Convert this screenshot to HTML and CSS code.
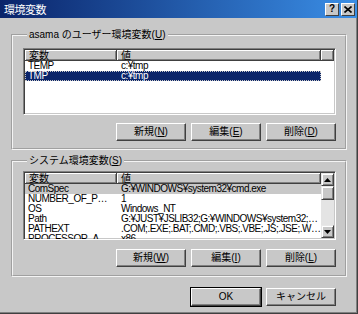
FILE: index.html
```html
<!DOCTYPE html>
<html lang="ja">
<head>
    <meta charset="UTF-8">
    <title>環境変数</title>
    <link rel="stylesheet" href="styles.css">
</head>
<body>
    <div class="window">
        <div class="titlebar">
            <span class="title">環境変数</span>
            <div class="caption-buttons">
                <span class="cap-btn">?</span>
                <span class="cap-btn">
                    <svg width="8" height="7" viewBox="0 0 8 7"><path d="M0.5 0.5 L7.5 6.5 M7.5 0.5 L0.5 6.5" stroke="#000" stroke-width="1.6"/></svg>
                </span>
            </div>
        </div>

        <div class="client">
            <fieldset class="group group-user">
                <legend>asama のユーザー環境変数(<u>U</u>)</legend>
                <div class="listview lv-user">
                    <div class="lv-main">
                        <div class="lv-header">
                            <span class="col col-name">変数</span>
                            <span class="col col-value">値</span>
                            <span class="col col-rest"></span>
                        </div>
                        <div class="lv-row">
                            <span class="cell name">TEMP</span>
                            <span class="cell value">c:¥tmp</span>
                        </div>
                        <div class="lv-row selected">
                            <span class="cell name">TMP</span>
                            <span class="cell value">c:¥tmp</span>
                        </div>
                    </div>
                </div>
                <div class="btn-row">
                    <button class="btn">新規(<u>N</u>)</button>
                    <button class="btn">編集(<u>E</u>)</button>
                    <button class="btn">削除(<u>D</u>)</button>
                </div>
            </fieldset>

            <fieldset class="group group-system">
                <legend>システム環境変数(<u>S</u>)</legend>
                <div class="listview lv-system">
                    <div class="lv-main">
                        <div class="lv-header">
                            <span class="col col-name">変数</span>
                            <span class="col col-value wide">値</span>
                        </div>
                        <div class="lv-row current">
                            <span class="cell name">ComSpec</span>
                            <span class="cell value">G:¥WINDOWS¥system32¥cmd.exe</span>
                        </div>
                        <div class="lv-row">
                            <span class="cell name">NUMBER_OF_PROCESSORS</span>
                            <span class="cell value">1</span>
                        </div>
                        <div class="lv-row">
                            <span class="cell name">OS</span>
                            <span class="cell value">Windows_NT</span>
                        </div>
                        <div class="lv-row">
                            <span class="cell name">Path</span>
                            <span class="cell value">G:¥JUST¥JSLIB32;G:¥WINDOWS¥system32;G:¥WINDOWS;G:¥WINDOWS¥System32¥Wbem</span>
                        </div>
                        <div class="lv-row">
                            <span class="cell name">PATHEXT</span>
                            <span class="cell value">.COM;.EXE;.BAT;.CMD;.VBS;.VBE;.JS;.JSE;.WSF;.WSH</span>
                        </div>
                        <div class="lv-row">
                            <span class="cell name">PROCESSOR_ARCHITECTURE</span>
                            <span class="cell value">x86</span>
                        </div>
                    </div>
                    <div class="scrollbar">
                        <span class="sb-btn">
                            <svg width="7" height="4" viewBox="0 0 7 4"><path d="M3.5 0 L7 4 L0 4 Z" fill="#000"/></svg>
                        </span>
                        <span class="sb-thumb"></span>
                        <span class="sb-track"></span>
                        <span class="sb-btn">
                            <svg width="7" height="4" viewBox="0 0 7 4"><path d="M0 0 L7 0 L3.5 4 Z" fill="#000"/></svg>
                        </span>
                    </div>
                </div>
                <div class="btn-row">
                    <button class="btn">新規(<u>W</u>)</button>
                    <button class="btn">編集(<u>I</u>)</button>
                    <button class="btn">削除(<u>L</u>)</button>
                </div>
            </fieldset>

            <div class="dialog-buttons">
                <button class="btn default">OK</button>
                <button class="btn">キャンセル</button>
            </div>
        </div>
    </div>
</body>
</html>
```

FILE: styles.css
```css
body {
    margin: 0;
    padding: 0;
    background-color: #c8c8c8;
    font-family: "Liberation Sans", "Noto Sans CJK JP", sans-serif;
    font-size: 10px;
    color: #000;
}

.window {
    width: 358px;
    height: 314px;
    box-sizing: border-box;
    background-color: #c8c8c8;
    border-right: 1px solid #404040;
    border-bottom: 1px solid #404040;
    box-shadow: inset -1px -1px 0 #808080;
    overflow: hidden;
}

.titlebar {
    height: 18px;
    display: flex;
    align-items: center;
    justify-content: space-between;
    padding: 0 2px 0 4px;
    background: linear-gradient(to right, #0a246a, #3a8ee6);
}

.title {
    color: #fff;
    font-family: "Noto Sans CJK JP", sans-serif;
    font-size: 11px;
    letter-spacing: -0.5px;
}

.caption-buttons {
    display: flex;
    gap: 2px;
}

.cap-btn {
    width: 12px;
    height: 11px;
    display: flex;
    align-items: center;
    justify-content: center;
    background-color: #c8c8c8;
    border: 1px solid;
    border-color: #fff #404040 #404040 #fff;
    font-weight: bold;
    font-size: 10px;
    line-height: 1;
}

.client {
    padding: 11px 0 0 11px;
}

.group {
    box-sizing: border-box;
    width: 336px;
    min-width: 0;
    margin: 0;
    border: 2px groove #f4f4f4;
    padding: 4px 9px 8px 10px;
}

.group legend {
    padding: 0 2px;
    margin-left: 4px;
    line-height: 12px;
}

.group-user {
    padding-top: 7px;
    padding-bottom: 7px;
}

.group-system {
    margin-top: 5px;
}

.group-system .btn-row {
    margin-top: 9px;
}

u {
    text-decoration: underline;
    text-underline-offset: 1px;
}

.listview {
    display: flex;
    background-color: #fff;
    border: 1px solid;
    border-color: #808080 #fff #fff #808080;
    box-shadow: inset 1px 1px 0 #404040, inset -1px -1px 0 #c8c8c8;
    padding: 1px;
    overflow: hidden;
}

.lv-user {
    height: 67px;
    box-sizing: border-box;
}

.lv-system {
    height: 69px;
    box-sizing: border-box;
}

.lv-main {
    flex: 1;
    min-width: 0;
}

.lv-header {
    display: flex;
    height: 11px;
}

.col {
    box-sizing: border-box;
    height: 11px;
    line-height: 10px;
    padding-left: 4px;
    background-color: #c8c8c8;
    border-right: 1px solid #404040;
    border-bottom: 1px solid #404040;
    box-shadow: inset 1px 1px 0 #fff, inset -1px -1px 0 #808080;
    font-family: "Noto Sans CJK JP", sans-serif;
}

.col-name {
    width: 92px;
}

.col-value {
    width: 204px;
}

.col-value.wide {
    flex: 1;
}

.col-rest {
    flex: 1;
}

.lv-row {
    display: flex;
    height: 10px;
    line-height: 10px;
    white-space: nowrap;
    letter-spacing: -0.5px;
}

.cell {
    box-sizing: border-box;
    padding-left: 3px;
    overflow: hidden;
    text-overflow: ellipsis;
}

.cell.name {
    width: 92px;
    padding-right: 3px;
}

.cell.value {
    flex: 1;
    min-width: 0;
    padding-left: 4px;
}

.lv-user .lv-row {
    width: 296px;
}

.lv-row.selected {
    background-color: #0a246a;
    color: #fff;
    outline: 1px dotted #c8c8c8;
    outline-offset: -1px;
}

.lv-row.current {
    background-color: #c8c8c8;
}

.scrollbar {
    width: 13px;
    flex: none;
    display: flex;
    flex-direction: column;
}

.sb-btn {
    box-sizing: border-box;
    width: 13px;
    height: 13px;
    display: flex;
    align-items: center;
    justify-content: center;
    background-color: #c8c8c8;
    border: 1px solid;
    border-color: #e8e8e8 #404040 #404040 #e8e8e8;
    box-shadow: inset 1px 1px 0 #fff, inset -1px -1px 0 #808080;
}

.sb-thumb {
    box-sizing: border-box;
    height: 14px;
    background-color: #c8c8c8;
    border: 1px solid;
    border-color: #e8e8e8 #404040 #404040 #e8e8e8;
    box-shadow: inset 1px 1px 0 #fff, inset -1px -1px 0 #808080;
}

.sb-track {
    flex: 1;
    background-color: #e4e4e4;
}

.btn-row {
    display: flex;
    justify-content: flex-end;
    gap: 5px;
    margin-top: 8px;
}

.btn {
    box-sizing: border-box;
    width: 70px;
    height: 18px;
    padding: 0;
    background-color: #c8c8c8;
    border: 1px solid;
    border-color: #fff #404040 #404040 #fff;
    box-shadow: inset -1px -1px 0 #808080;
    font-family: "Liberation Sans", "Noto Sans CJK JP", sans-serif;
    font-size: 10px;
    color: #000;
    line-height: 1;
}

.btn.default {
    outline: 1px solid #000;
}

.dialog-buttons {
    display: flex;
    justify-content: flex-end;
    gap: 5px;
    width: 336px;
    margin-top: 11px;
    padding-right: 11px;
    box-sizing: border-box;
}
```
